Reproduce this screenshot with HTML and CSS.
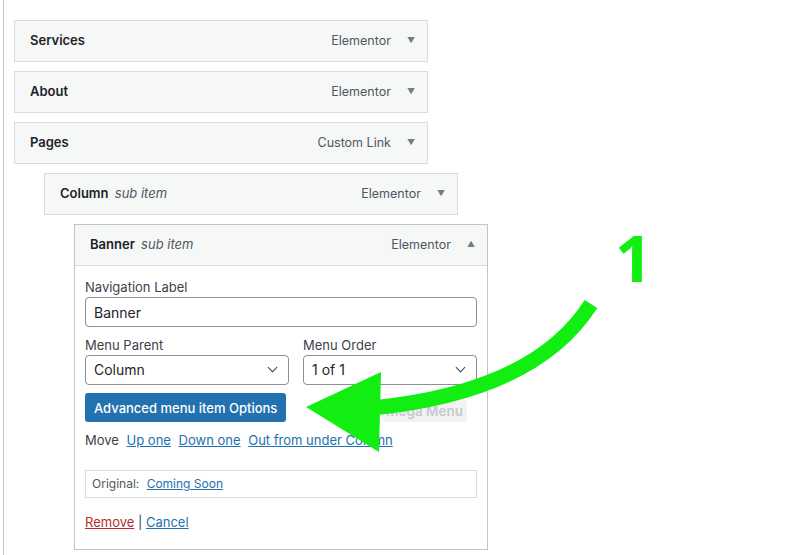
FILE: index.html
```html
<!DOCTYPE html>
<html lang="en">
<head>
    <meta charset="UTF-8">
    <title>Menu Structure</title>
    <link rel="stylesheet" href="styles.css">
</head>
<body>
    <div class="menu-wrap">
        <!-- Top level items -->
        <div class="menu-item">
            <div class="item-bar">
                <span class="item-title">Services</span>
                <span class="item-type">Elementor</span>
                <span class="item-toggle">&#9660;</span>
            </div>
        </div>
        <div class="menu-item">
            <div class="item-bar">
                <span class="item-title">About</span>
                <span class="item-type">Elementor</span>
                <span class="item-toggle">&#9660;</span>
            </div>
        </div>
        <div class="menu-item">
            <div class="item-bar">
                <span class="item-title">Pages</span>
                <span class="item-type">Custom Link</span>
                <span class="item-toggle">&#9660;</span>
            </div>
        </div>

        <!-- Sub items -->
        <div class="menu-item depth-1">
            <div class="item-bar">
                <span class="item-title">Column <em>sub item</em></span>
                <span class="item-type">Elementor</span>
                <span class="item-toggle">&#9660;</span>
            </div>
        </div>
        <div class="menu-item depth-2 open">
            <div class="item-bar">
                <span class="item-title">Banner <em>sub item</em></span>
                <span class="item-type">Elementor</span>
                <span class="item-toggle">&#9650;</span>
            </div>
            <div class="item-settings">
                <label class="field-label">Navigation Label</label>
                <input class="field-input" type="text" value="Banner">

                <div class="field-row">
                    <div class="field-col parent-col">
                        <label class="field-label">Menu Parent</label>
                        <div class="select-box">Column <span class="chev"></span></div>
                    </div>
                    <div class="field-col order-col">
                        <label class="field-label">Menu Order</label>
                        <div class="select-box">1 of 1 <span class="chev"></span></div>
                    </div>
                </div>

                <div class="button-row">
                    <button class="btn-primary">Advanced menu item Options</button>
                    <button class="btn-faded">Mega Menu</button>
                </div>

                <p class="move-line">Move <a href="#">Up one</a> <a href="#">Down one</a> <a href="#">Out from under Column</a></p>

                <div class="original-box">Original: <a href="#">Coming Soon</a></div>

                <p class="actions"><a href="#" class="remove">Remove</a> | <a href="#">Cancel</a></p>
            </div>
        </div>
    </div>

    <!-- Annotation overlay -->
    <svg class="annotation" width="794" height="555" viewBox="0 0 794 555">
        <path d="M 591 304 Q 535 392 372 408" fill="none" stroke="#12ee12" stroke-width="15"/>
        <polygon points="381,372 306,407 379,452" fill="#12ee12"/>
        <text x="615" y="282" class="step-num">1</text>
    </svg>
</body>
</html>
```

FILE: styles.css
```css
body {
    margin: 0;
    background: #fff;
    font-family: Inter, "Noto Sans", sans-serif;
    color: #1d2327;
    position: relative;
    height: 555px;
    overflow: hidden;
}

.menu-wrap {
    margin-left: 3px;
    border-left: 1px solid #c3c4c7;
    padding: 20px 0 0 10px;
    height: 555px;
    box-sizing: border-box;
}

.menu-item {
    width: 414px;
    margin-bottom: 9px;
    box-sizing: border-box;
    border: 1px solid #dcdcde;
    background: #f6f7f7;
}

.depth-1 { margin-left: 30px; }
.depth-2 { margin-left: 60px; }

.item-bar {
    display: flex;
    align-items: center;
    height: 40px;
    padding: 0 12px 2px 15px;
    box-sizing: border-box;
    font-size: 13px;
}

.item-title {
    flex: 1;
    font-weight: 600;
    color: #1d2327;
}

.item-title em {
    font-weight: 400;
    color: #50575e;
    margin-left: 3px;
}

.item-type {
    color: #50575e;
    font-size: 12.5px;
}

.item-toggle {
    margin-left: 16px;
    font-size: 8px;
    color: #787c82;
}

.open {
    border-color: #c3c4c7;
}

.open .item-bar {
    border-bottom: 1px solid #dcdcde;
    height: 41px;
}

.item-settings {
    background: #fff;
    padding: 11px 10px 17px 10px;
    font-size: 14px;
}

.field-label {
    display: block;
    line-height: 20px;
    color: #3c434a;
    font-size: 13px;
}

.field-input {
    display: block;
    width: 100%;
    box-sizing: border-box;
    height: 30px;
    border: 1px solid #8c8f94;
    border-radius: 4px;
    padding: 0 8px;
    font-family: inherit;
    font-size: 14px;
    color: #1d2327;
}

.field-row {
    display: flex;
    gap: 14px;
    margin-top: 8px;
}

.parent-col { width: 204px; }
.order-col { flex: 1; }

.select-box {
    position: relative;
    height: 30px;
    box-sizing: border-box;
    border: 1px solid #8c8f94;
    border-radius: 4px;
    padding: 0 8px;
    line-height: 28px;
    color: #1d2327;
}

.chev {
    position: absolute;
    right: 12px;
    top: 8px;
    width: 6px;
    height: 6px;
    border-right: 1.5px solid #3c434a;
    border-bottom: 1.5px solid #3c434a;
    transform: rotate(45deg);
}

.button-row {
    display: flex;
    align-items: center;
    margin-top: 8px;
}

.btn-primary {
    height: 29px;
    padding: 0 9px;
    background: #2271b1;
    color: #fff;
    border: none;
    border-radius: 3px;
    font-family: inherit;
    font-size: 13px;
    font-weight: 500;
}

.btn-faded {
    margin-left: auto;
    margin-right: 10px;
    margin-top: 6px;
    height: 22px;
    padding: 0 4px;
    background: #f3f3f4;
    color: #c8c9cc;
    border: none;
    border-radius: 3px;
    font-family: inherit;
    font-size: 13.5px;
    font-weight: 600;
}

.move-line {
    margin: 8px 0 0;
    line-height: 20px;
    color: #3c434a;
    font-size: 13px;
}

.move-line a {
    margin-left: 4px;
}

a {
    color: #2271b1;
    text-decoration: underline;
}

.original-box {
    margin-top: 20px;
    height: 28px;
    box-sizing: border-box;
    border: 1px solid #dcdcde;
    padding: 0 6px;
    line-height: 25px;
    font-size: 12px;
    color: #50575e;
}

.original-box a {
    margin-left: 4px;
}

.actions {
    margin: 14px 0 0;
    line-height: 20px;
    font-size: 13px;
    color: #3c434a;
}

.actions .remove {
    color: #b32d2e;
}

.annotation {
    position: absolute;
    left: 0;
    top: 0;
    pointer-events: none;
}

.step-num {
    font-family: "Open Sans", sans-serif;
    font-weight: 700;
    font-size: 65px;
    fill: #12ee12;
}
```
